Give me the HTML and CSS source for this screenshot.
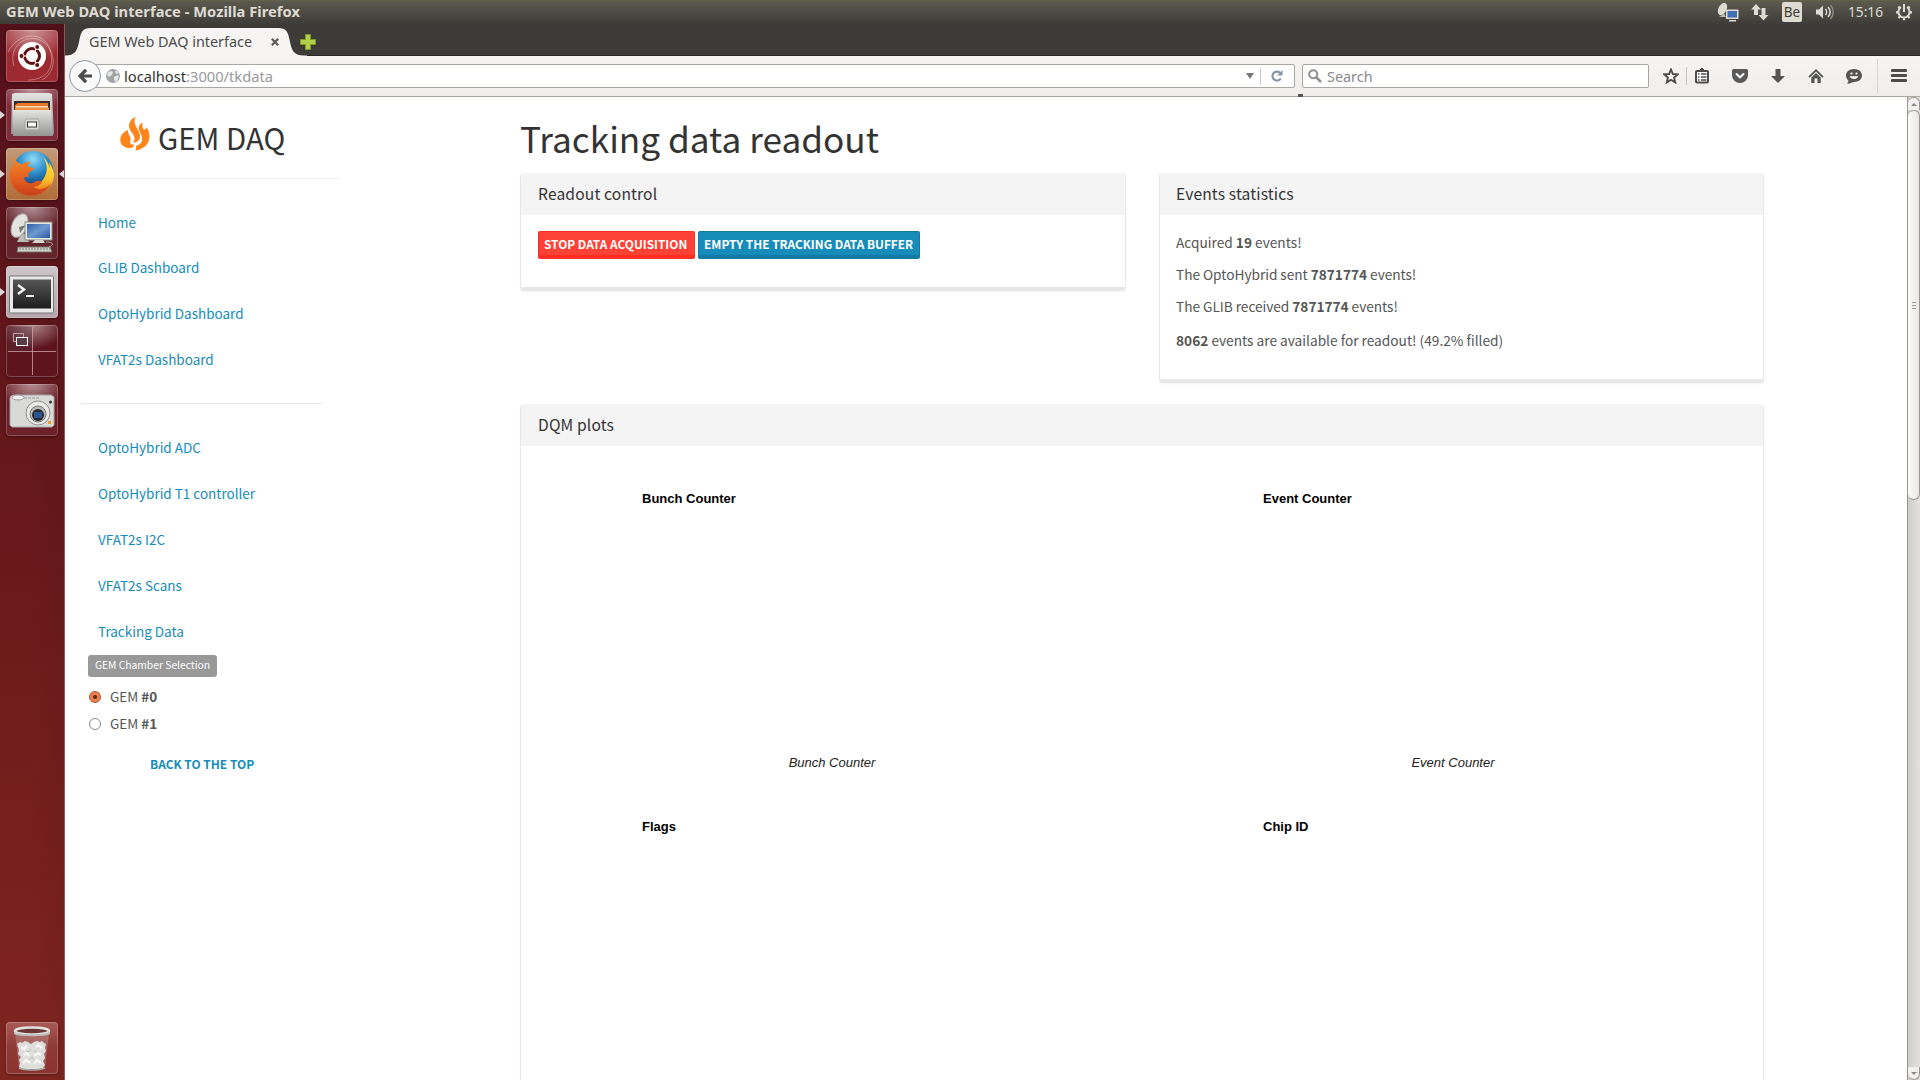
FILE: index.html
```html
<!DOCTYPE html>
<html lang="en">
<head>
<meta charset="utf-8">
<title>GEM Web DAQ interface</title>
<link rel="stylesheet" href="styles.css">
</head>
<body>
<svg class="defs" width="0" height="0" aria-hidden="true">
  <defs>
    <linearGradient id="metal" x1="0" y1="0" x2="0" y2="1"><stop offset="0" stop-color="#e4e4e2"/><stop offset="1" stop-color="#949492"/></linearGradient>
    <linearGradient id="screen" x1="0" y1="0" x2="1" y2="1"><stop offset="0" stop-color="#2e5fa8"/><stop offset=".5" stop-color="#6f9ad0"/><stop offset="1" stop-color="#2b57a0"/></linearGradient>
    <linearGradient id="term" x1="0" y1="0" x2="0" y2="1"><stop offset="0" stop-color="#555"/><stop offset=".5" stop-color="#3a3a3a"/><stop offset="1" stop-color="#1c1c1c"/></linearGradient>
    <radialGradient id="globe" cx=".5" cy=".2" r=".8"><stop offset="0" stop-color="#8fdcf7"/><stop offset=".45" stop-color="#2d8ccb"/><stop offset="1" stop-color="#0b2459"/></radialGradient>
    <linearGradient id="fox" x1="0" y1="0" x2="0" y2="1"><stop offset="0" stop-color="#f08a2c"/><stop offset=".5" stop-color="#e8641f"/><stop offset="1" stop-color="#c9401a"/></linearGradient>
    <linearGradient id="tail" x1="0" y1="0" x2="0" y2="1"><stop offset="0" stop-color="#ffe94a"/><stop offset=".6" stop-color="#fbc02a"/><stop offset="1" stop-color="#e8641f"/></linearGradient>
  </defs>
</svg>

<header class="menubar">
  <div class="menubar-title">GEM Web DAQ interface - Mozilla Firefox</div>
  <div class="tray">
    <svg class="tray-remote" width="22" height="20" viewBox="0 0 22 20"><ellipse cx="5.500" cy="7" rx="4" ry="6.600" transform="rotate(28 5.500 7)" fill="#dfdbd2"/><path d="M5 13l-3 2h7l-2-4z" fill="#b9b5ac"/><rect x="9" y="7.500" width="12.500" height="9.500" fill="#dfdbd2"/><rect x="10.500" y="9" width="9.500" height="6.500" fill="#3f6fb5"/><path d="M12 18h7v1.500h-7z" fill="#dfdbd2"/></svg>
    <svg class="tray-net" width="18" height="18" viewBox="0 0 18 18" fill="#dfdbd2"><path d="M5 1l5 5.500H7V12H3V6.500H0z"/><path d="M12.500 17.500l-5-5.500H10.500V5H14.500v7H17.500z"/></svg>
    <span class="tray-lang">Be</span>
    <svg class="tray-vol" width="20" height="18" viewBox="0 0 20 18" fill="none" stroke-width="1.500"><path d="M1 6.500h3L8 2.500v13l-4-4H1z" fill="#dfdbd2"/><path d="M10.500 6c1.400 1.600 1.400 4.400 0 6M13 4c2.600 3 2.600 7 0 10" stroke="#dfdbd2"/><path d="M15.500 2c3.500 4 3.500 10 0 14" stroke="#8d8a82"/></svg>
    <span class="tray-time">15:16</span>
    <svg class="tray-gear" width="18" height="18" viewBox="0 0 18 18" fill="none" stroke="#dfdbd2"><path d="M6 4.200A5.600 5.600 0 1 0 12 4.200" stroke-width="2"/><path d="M9 1v8" stroke-width="2"/><path d="M1 9.300h2M15 9.300h2M3.300 3.600l1.500 1.500M14.700 3.600l-1.500 1.500M3.400 15l1.500-1.500M14.600 15l-1.500-1.500M9 15v2.300" stroke-width="2.200"/></svg>
  </div>
</header>

<div class="desktop">
  <aside class="launcher">
    <div class="tile tile-dash"><svg width="52" height="52" viewBox="0 0 52 52"><g fill="none" stroke="#fff" stroke-opacity=".35"><path d="M2 22C12 2 38 0 44 20s-6 30-22 30"/><path d="M8 36C2 16 20 4 34 10s20 30 2 40"/></g><circle cx="26" cy="26" r="14" fill="#fff"/><circle cx="26" cy="26" r="7.500" fill="none" stroke="#5e1210" stroke-width="3"/><g stroke="#fff" stroke-width="1.200"><path d="M26 26H14M26 26l6-10.400M26 26l6 10.400"/></g><circle cx="26" cy="26" r="5.500" fill="#fff"/><g fill="#5e1210" stroke="#fff"><circle cx="15.500" cy="26" r="2.500"/><circle cx="31.200" cy="17" r="2.500"/><circle cx="31.200" cy="35" r="2.500"/></g></svg></div>
    <div class="tile tile-files running"><svg width="52" height="52" viewBox="0 0 52 52"><path d="M6 5l3-1h34l3 1 2 40H5z" fill="url(#metal)"/><rect x="8" y="12" width="36" height="12" fill="#3a2c24"/><path d="M9 16l3-2h30v9H9z" fill="#e8792c"/><path d="M10 17h32v3H10z" fill="#f6d9b4"/><path d="M9 18.500h34V24H9z" fill="#ef9145"/><path d="M7 21h38l2 26H7z" fill="url(#metal)"/><rect x="19" y="30" width="14" height="11" rx="2" fill="#d8d8d6" stroke="#a5a5a3"/><rect x="21.500" y="33" width="9" height="5" fill="#fff" stroke="#333"/></svg></div>
    <div class="tile tile-firefox running active"><svg width="52" height="52" viewBox="0 0 52 52"><circle cx="27" cy="23" r="20" fill="url(#globe)"/><path d="M36 8c5 5 6 14 3 20-3 7-9 11-15 10l3 9c12 0 21-9 21-21-1-4-2-8-5-12l1 6c-2-5-4-9-8-12z" fill="url(#tail)"/><path d="M8 9c-1 3-1 5 0 7-3 4-5 9-4 14 1 10 10 17.500 21 17.500 9 0 16-4 20-12-5 6-13 7-18 3 4 1 8-2 9-5-3-1-6-1-8 1-4 2-8 0-10-4 1-2 3-2 5-1l-1-4c2-2 5-3 7-5-2-1-5-1-7-2 0-2 1-3 3-5-4 0-7 1-9 3-3-1-6-3-8-7z" fill="url(#fox)"/></svg></div>
    <div class="tile tile-remote"><svg width="52" height="52" viewBox="0 0 52 52"><path d="M15 27l-4 8h12l-3-8z" fill="#bdbdb8"/><ellipse cx="13.500" cy="18.500" rx="7.500" ry="12.500" transform="rotate(24 13.500 18.500)" fill="#e3e3df" stroke="#a5a5a0"/><path d="M13 20l7-2-6 8z" fill="#777"/><rect x="19" y="15" width="27" height="18" fill="#e8e8e4" stroke="#8b8b86"/><rect x="21" y="17" width="23" height="14" fill="url(#screen)"/><path d="M29 33h8l2 3H26z" fill="#d6d6d2"/><path d="M12 40h32l2 5H11z" fill="#d2d2cd" stroke="#73736f"/><path d="M13 42h31" stroke="#777" stroke-dasharray="2 1"/><path d="M40 35c8 0 8 3 3 5" fill="none" stroke="#aaa"/></svg></div>
    <div class="tile tile-term running"><svg width="52" height="52" viewBox="0 0 52 52"><rect x="3.500" y="10" width="44" height="37" rx="1" fill="#e9e9e7" stroke="#777"/><rect x="7" y="13.500" width="38" height="29" fill="url(#term)"/><path d="M12 19l6 4.500-6 4.500" fill="none" stroke="#eee" stroke-width="2.500"/><path d="M20 30h8" stroke="#eee" stroke-width="2"/></svg></div>
    <div class="tile tile-ws"><svg width="52" height="52" viewBox="0 0 52 52" fill="none"><path d="M2 2h24v24H2z" fill="#503040" fill-opacity=".35"/><path d="M26.500 2v48M2 26.500h48" stroke="#c9a0a2" stroke-opacity=".8"/><rect x="7.500" y="8.500" width="10" height="8" stroke="#b9a0a4"/><rect x="10.500" y="12.500" width="11" height="8" fill="#5a3b45" stroke="#fff"/></svg></div>
    <div class="tile tile-cam"><svg width="52" height="52" viewBox="0 0 52 52"><path d="M5 12l3-1h37l3 2v28l-2 2H6l-2-2V14z" fill="#d9d9d7" stroke="#a5a5a2"/><path d="M18 14h16" stroke="#999" stroke-dasharray="3 1"/><ellipse cx="12" cy="13.500" rx="6" ry="2.500" fill="#eee" stroke="#999"/><circle cx="32" cy="29" r="12" fill="#e9e9e8" stroke="#8d8d8b"/><circle cx="32" cy="30" r="8" fill="#b9b9b8" stroke="#777"/><circle cx="32" cy="31" r="6" fill="#26292e"/><rect x="28" y="28" width="8" height="6" fill="#2a5590"/><circle cx="44.500" cy="18" r="1.500" fill="#333"/><rect x="42" y="37" width="3" height="3" fill="#e89a2b"/></svg></div>
    <div class="tile tile-trash"><svg width="52" height="52" viewBox="0 0 52 52"><path d="M9 10h34l-4 37H13z" fill="#c9a3a2" fill-opacity=".4"/><path d="M11 22l3-2 2 1 3-2 3 1 3 2 3-2 3-1 3 1 2-1 2 2 2 1-1 4 1 3-2 3 1 4-2 3 2 4-2 3-4 1H17l-4-2 1-4-1-3 2-3-3-3 1-4z" fill="#dededb"/><path d="M15 25l3 2 3-3M30 25l3-2 3 3M18 33l3-2 2 3M28 34l4-3 3 2M17 41l3-3 4 3M28 42l3-4 4 3" fill="none" stroke="#f6f6f4" stroke-width="2.500"/><path d="M20 29l3 1 2-3M28 29l3 1M23 38l3-3 2 3" fill="none" stroke="#bfbfbc"/><ellipse cx="26" cy="9" rx="17" ry="3.500" fill="#6f3733" stroke="#e0e0de" stroke-width="2.500"/><path d="M8 10v2c4 3 32 3 36 0v-2c-5 3-31 3-36 0z" fill="#bdbdba"/><path d="M13 46c5 2.500 21 2.500 26 0" fill="none" stroke="#aaa" stroke-width="1.500"/></svg></div>
  </aside>

  <div class="browser">
    <div class="tabstrip">
      <div class="tab">
        <svg class="tab-shape" width="245" height="32" viewBox="0 0 245 32"><path d="M0 31.500C10 31.500 12 27 14 18 16 8 17 4 26 4H213c9 0 10 4 12 14 2 9 4 13.500 14 13.500h3v.5H0z" fill="#f6f5f4"/></svg>
        <span class="tab-title">GEM Web DAQ interface</span>
        <svg class="tab-close" width="8" height="8" viewBox="0 0 8 8" stroke="#5a5a5a" stroke-width="2.200"><path d="M.8.8l6.400 6.400M7.200.8L.8 7.200"/></svg>
      </div>
      <svg class="newtab" width="16" height="16" viewBox="0 0 16 16"><path d="M5.500.5h5v5h5v5h-5v5h-5v-5h-5v-5h5z" fill="#b4d04a" stroke="#7d9a22"/></svg>
    </div>
    <div class="toolbar">
      <div class="back"><svg width="14" height="14" viewBox="0 0 14 14" fill="none" stroke="#4a4a4a" stroke-width="3.200"><path d="M8 .8L2 7l6 6.200M2.500 7H14"/></svg></div>
      <div class="urlbar">
        <svg width="14" height="14" viewBox="0 0 14 14"><circle cx="7" cy="7" r="7" fill="#a3a3a3"/><path d="M2 3l3-1 2 1-1 3-3 2-2-2zM8 8l4-2 1 2-2 4-2 1-1-3zM9 2l2 0 2 2-3 1z" fill="#e4e4e4"/></svg>
        <span class="url"><b>localhost</b>:3000/tkdata</span>
        <svg class="drop" width="8" height="6" viewBox="0 0 8 6"><path d="M0 0h8L4 6z" fill="#777"/></svg>
        <span class="urlsep"></span>
        <svg class="reload" width="12" height="12" viewBox="0 0 12 12"><path d="M9.300 3A4.500 4.500 0 1 0 9.800 8.500" fill="none" stroke="#8595a5" stroke-width="2.200"/><path d="M11.500 0v5.500H6z" fill="#8595a5"/></svg>
      </div>
      <div class="searchbar">
        <svg width="14" height="14" viewBox="0 0 14 14" fill="none" stroke="#8e8e8e"><circle cx="5.200" cy="5.200" r="4" stroke-width="2"/><path d="M8 8l5 5" stroke-width="2.500"/></svg>
        <span>Search</span>
      </div>
      <div class="tools">
        <span class="tool tool-star"><svg width="16" height="16" viewBox="0 0 16 16"><path d="M8 1.500l1.900 4.500 4.900.4-3.700 3.200 1.100 4.800L8 11.800l-4.200 2.600 1.100-4.800L1.200 6.400l4.900-.4z" fill="#f6f5f4" stroke="#4c4c4c" stroke-width="1.900"/></svg></span>
        <span class="tool-sep"></span>
        <span class="tool tool-list"><svg width="16" height="16" viewBox="0 0 16 16"><rect x="2" y="3" width="12" height="11.500" rx="1" fill="#fff" stroke="#4c4c4c" stroke-width="2"/><path d="M5 3l3-3 3 3z" fill="#4c4c4c" stroke="#4c4c4c"/><path d="M4 6h1.500M4 9h1.500M4 12h1.500M7 6h5.500M7 9h5.500M7 12h5.500" stroke="#4c4c4c" stroke-width="1.500"/></svg></span>
        <span class="tool"><svg width="16" height="16" viewBox="0 0 16 16"><path d="M1.500 1h13A1.500 1.500 0 0 1 16 2.500v4.500a8 8 0 0 1-16 0V2.500A1.500 1.500 0 0 1 1.500 1z" fill="#5a5a5a"/><path d="M4.500 6L8 9.300 11.500 6" fill="none" stroke="#fff" stroke-width="2" stroke-linecap="round"/></svg></span>
        <span class="tool"><svg width="16" height="16" viewBox="0 0 16 16"><path d="M5.500 1h5v7H15l-7 7-7-7h4.500z" fill="#555"/></svg></span>
        <span class="tool"><svg width="16" height="16" viewBox="0 0 16 16"><path d="M1 9.200L8 2.300l7 6.900" fill="none" stroke="#555" stroke-width="1.800"/><path d="M3.300 9.500L8 5l4.700 4.500V15H9.500v-4.500h-3V15H3.300z" fill="#555"/></svg></span>
        <span class="tool"><svg width="16" height="16" viewBox="0 0 16 16"><path d="M8 1C12.500 1 16 3.800 16 7.500S12.500 14 8 14c-1 0-2 0-3 1-1 .6-3 .7-4 .5 1-1 1.500-2 1.500-3C1 11.300 0 9.600 0 7.500 0 3.800 3.500 1 8 1z" fill="#555"/><circle cx="5.500" cy="5.500" r="1.100" fill="#fff"/><circle cx="10.500" cy="5.500" r="1.100" fill="#fff"/><path d="M3.700 8.300h8.600c-1 3.600-7.600 3.600-8.600 0z" fill="#fff"/></svg></span>
        <span class="menu-sep"></span>
        <span class="tool tool-menu"><svg width="16" height="16" viewBox="0 0 16 16" fill="#4c4c4c"><rect y="1" width="16" height="3" rx="1"/><rect y="6" width="16" height="3" rx="1"/><rect y="11" width="16" height="3" rx="1"/></svg></span>
      </div>
      <span class="drop-mark"></span>
    </div>

    <div class="viewport">
      <nav class="sidebar">
        <div class="brand">
          <svg width="30" height="34" viewBox="0 0 30 34" fill="#ff851b"><path d="M8 13C3 15 .3 18.500.3 22.700.3 27.500 4 31 10 31c2.300 0 3.800-1 4.200-3.200-3.200.3-4.700-1.300-4-3.800.8-2.500.3-3.700-.8-5.500C8.400 16.800 7.900 15 8 13z"/><path d="M15.500 0C10.500 2 8.300 6 9.300 11c.8 3.500 5 6 5.200 10 .1 2-.6 3.500-2 4.500 3.700.3 7-1.500 7.500-5.200.4-3.300-1.300-5.300-2.700-8.300C15.500 8.300 13.300 4.500 15.500 0z"/><path d="M22.800 5.500c-3.600 1.800-5 4.700-3.500 8.300 1.400 3.300 3.500 5.700 2.700 9.700-.6 3-2.900 4.700-6 5.200.5 1.800.3 3.300-.8 4.800C23.500 32.500 29.500 27 29.500 19.500c0-4-1.300-7-2.900-9.300-.6 1.500-1.200 2.300-2.200 2.300-1.900-.3-2.400-3.500-1.600-7z"/></svg>
          <span>GEM DAQ</span>
        </div>
        <ul class="links">
          <li>Home</li><li>GLIB Dashboard</li><li>OptoHybrid Dashboard</li><li>VFAT2s Dashboard</li>
        </ul>
        <hr>
        <ul class="links links-tools">
          <li>OptoHybrid ADC</li><li>OptoHybrid T1 controller</li><li>VFAT2s I2C</li><li>VFAT2s Scans</li><li>Tracking Data</li>
        </ul>
        <div class="chamber">
          <span class="label">GEM Chamber Selection</span>
          <div class="option"><i class="radio checked"></i><span>GEM <b>#0</b></span></div>
          <div class="option"><i class="radio"></i><span>GEM <b>#1</b></span></div>
        </div>
        <div class="totop">BACK TO THE TOP</div>
      </nav>

      <main class="content">
        <h1>Tracking data readout</h1>
        <div class="row">
          <section class="panel">
            <h2>Readout control</h2>
            <div class="panel-body buttons">
              <span class="btn btn-danger">STOP DATA ACQUISITION</span>
              <span class="btn btn-primary">EMPTY THE TRACKING DATA BUFFER</span>
            </div>
          </section>
          <section class="panel">
            <h2>Events statistics</h2>
            <div class="panel-body stats">
              <p>Acquired <b>19</b> events!</p>
              <p>The OptoHybrid sent <b>7871774</b> events!</p>
              <p>The GLIB received <b>7871774</b> events!</p>
              <p><b>8062</b> events are available for readout! (49.2% filled)</p>
            </div>
          </section>
        </div>
        <section class="panel plots-panel">
          <h2>DQM plots</h2>
          <div class="plots">
            <figure><h3>Bunch Counter</h3><figcaption>Bunch Counter</figcaption></figure>
            <figure><h3>Event Counter</h3><figcaption>Event Counter</figcaption></figure>
            <figure><h3>Flags</h3></figure>
            <figure><h3>Chip ID</h3></figure>
          </div>
        </section>
      </main>

      <div class="scrollbar">
        <div class="sb-btn"><svg width="6" height="3" viewBox="0 0 6 3"><path d="M0 3l3-3 3 3z" fill="#8a8a88"/></svg></div>
        <div class="sb-thumb"><i></i><i></i><i></i></div>
        <div class="sb-btn sb-down"><svg width="6" height="3" viewBox="0 0 6 3"><path d="M0 0l3 3 3-3z" fill="#8a8a88"/></svg></div>
      </div>
    </div>
  </div>
</div>
</body>
</html>
```
FILE: styles.css
```css
* { box-sizing: border-box; }
html, body { margin: 0; height: 100%; overflow: hidden; }
body {
  display: flex;
  flex-direction: column;
  background: #fff;
  font-family: "Noto Sans CJK SC", "Noto Sans", sans-serif;
  font-size: 13.5px;
  color: #555;
}
svg { display: block; flex: none; }
.defs { position: absolute; }
ul, h1, h2, h3, p, figure { margin: 0; padding: 0; font-weight: 400; }
ul { list-style: none; }

/* Desktop menu bar */
.menubar {
  flex: none;
  height: 24px;
  display: flex;
  justify-content: space-between;
  align-items: center;
  padding: 0 7px 0 6px;
  background: linear-gradient(#66624f 0, #5b584e 2px, #3d3c38 100%);
  font-family: "Noto Sans", sans-serif;
  color: #dfdbd2;
}
.menubar-title { font-size: 14.65px; font-weight: 700; line-height: 20px; margin-top: -2px; letter-spacing: .04px; }
.tray { display: flex; align-items: center; }
.tray-net { margin-left: 12px; }
.tray-lang {
  margin-left: 13px;
  width: 20px;
  height: 20px;
  border-radius: 2px;
  background: #dfdbd2;
  color: #3c3b37;
  font-size: 13.5px;
  line-height: 20px;
  text-align: center;
}
.tray-vol { margin-left: 13px; }
.tray-time { margin-left: 13px; font-size: 13.7px; line-height: 22px; }
.tray-gear { margin-left: 12px; }

.desktop { flex: 1; display: flex; min-height: 0; }

/* Launcher */
.launcher {
  flex: none;
  width: 65px;
  padding: 6px 0 6px 6px;
  display: flex;
  flex-direction: column;
  gap: 7px;
  background: linear-gradient(90deg, rgba(0,0,0,0) 50%, rgba(0,0,0,.05)), linear-gradient(#54101a 0, #5c141b 20%, #67181b 45%, #761f1d 75%, #7f2520 100%);
  border-right: 1px solid #93575a;
}
.tile {
  position: relative;
  flex: none;
  width: 52px;
  height: 52px;
  border-radius: 4px;
  box-shadow: inset 0 0 0 1px rgba(255,255,255,.22), 0 1px 3px rgba(0,0,0,.35);
  background: radial-gradient(ellipse 34px 24px at 50% 0, rgba(255,255,255,.5), rgba(255,255,255,0)), #71303a;
}
.tile-dash { background: radial-gradient(ellipse 40px 30px at 50% 0, rgba(255,255,255,.5), rgba(255,255,255,0)), #9c2a30; }
.tile-files { background-color: #7d2a39; }
.tile-firefox { background: linear-gradient(#c49a78, #b06c36); }
.tile-remote { background-color: #65232b; }
.tile-term { background: linear-gradient(#cfc6ca, #b5a5aa); }
.tile-ws { background-color: #5e141d; }
.tile-cam { background-color: #6c2129; }
.tile-trash { margin-top: auto; background: linear-gradient(#a85a57, #8d3834 50%, #8a3430); }
.running::before {
  content: "";
  position: absolute;
  left: -6px;
  top: 22px;
  border: 4px solid transparent;
  border-left: 5px solid #dcd5d6;
  border-right: 0;
}
.active::after {
  content: "";
  position: absolute;
  right: -6px;
  top: 22px;
  border: 4px solid transparent;
  border-right: 5px solid #dcd5d6;
  border-left: 0;
}

/* Browser chrome */
.browser { flex: 1; display: flex; flex-direction: column; min-width: 0; }
.tabstrip {
  flex: none;
  height: 32px;
  display: flex;
  align-items: flex-start;
  background: #3c3b37;
  box-shadow: inset 0 -1px #2a2926;
  font-family: "Noto Sans", sans-serif;
}
.tab { position: relative; width: 235px; height: 32px; display: flex; align-items: center; padding: 4px 0 0 24px; }
.tab-shape { position: absolute; left: 0; top: 0; }
.tab-title { position: relative; width: 182px; font-size: 14.4px; line-height: 24px; color: #4c4c4c; white-space: nowrap; }
.tab-close { position: relative; }
.newtab { margin: 10px 0 0; }
.toolbar {
  position: relative;
  flex: none;
  height: 41px;
  display: flex;
  align-items: flex-start;
  padding-left: 4px;
  background: linear-gradient(#f6f5f4, #efeeed);
  border-bottom: 1px solid #aaa6a0;
  font-family: "Noto Sans", sans-serif;
}
.back {
  position: relative;
  z-index: 1;
  width: 32px;
  height: 32px;
  margin-top: 4px;
  border: 1px solid #8d98a8;
  border-radius: 50%;
  background: #fafafa;
  display: flex;
  align-items: center;
  justify-content: center;
}
.urlbar, .searchbar {
  height: 24px;
  margin-top: 8px;
  display: flex;
  align-items: center;
  border: 1px solid #aaa6a0;
  border-radius: 2px;
  background: #fff;
}
.urlbar { width: 1200px; margin-left: -6px; padding: 0 11px 0 10px; }
.url { flex: 1; margin: 0 0 0 4px; font-size: 14.7px; line-height: 22px; color: #999; }
.url b { font-weight: 400; color: #333; }
.urlsep { width: 1px; height: 17px; margin: 0 10px 0 6px; background: #c6ccd2; }
.searchbar { width: 347px; margin-left: 7px; padding-left: 5px; font-size: 14.4px; color: #8a8a8a; }
.searchbar span { margin: 1px 0 0 5px; line-height: 22px; }
.tools { display: flex; align-items: center; height: 40px; }
.tool { margin-right: 22px; }
.tool-star { margin: 0 7px 0 14px; }
.tool-sep { width: 1px; height: 18px; margin-right: 7px; background: #bcc6d0; }
.menu-sep { width: 1px; height: 34px; margin: 0 13px 0 -7px; background: #d8d6d4; }
.tool-menu { margin: 0; }
.drop-mark { position: absolute; left: 1233px; bottom: -1px; width: 5px; height: 3px; background: #555; }

.viewport { flex: 1; min-height: 0; display: flex; overflow: hidden; }

/* Sidebar */
.sidebar { flex: none; width: 274px; }
.brand {
  height: 82px;
  padding: 20px 0 0 55px;
  display: flex;
  border-bottom: 1px solid #eee;
  color: #333;
}
.brand span { margin: -1px 0 0 8px; font-size: 29.4px; line-height: 42px; height: 42px; }
.sidebar .links { padding: 20px 0 20px 33px; color: #158cba; }
.links li { height: 46px; line-height: 45px; }
.links-tools li { line-height: 47px; }
.links li:first-child { line-height: 47px; }
.sidebar hr { margin: 0 16px; border: 0; height: 1px; background: #e8e8e8; }
.links + .chamber { margin-top: -19px; padding-left: 24px; }
.label {
  display: block;
  width: 129px;
  height: 22px;
  margin: 0 0 6px -1px;
  border-radius: 3px;
  background: #999;
  color: #fff;
  font-size: 10.3px;
  line-height: 19px;
  text-align: center;
}
.option { height: 27px; display: flex; align-items: center; }
.option span { line-height: 25px; margin: -1px 0 0 9px; }
.radio { width: 12px; height: 12px; border: 1px solid #888; border-radius: 50%; background: #fff; }
.checked { border-color: #a8502d; background: radial-gradient(circle, #5a3628 0 1.7px, #f0814f 2.5px); }
.totop { padding: 15px 0 0 85px; font-size: 11.95px; font-weight: 700; line-height: 24px; color: #158cba; }

/* Main content */
.content { flex: none; width: 1244px; margin-left: 181px; color: #555; }
h1 { margin-top: 14px; height: 62px; font-size: 35.2px; line-height: 54px; color: #333; }
.row { display: grid; grid-template-columns: 606px 605px; justify-content: space-between; align-items: start; }
.panel {
  background: #fff;
  border: 1px solid #e7e7e7;
  border-top: 0;
  border-bottom-width: 4px;
  border-radius: 4px;
  box-shadow: 0 1px 2px rgba(0,0,0,.05);
}
h2 {
  height: 42px;
  padding-left: 17px;
  background: #f4f4f4;
  border-radius: 3px 3px 0 0;
  color: #333;
  font-size: 15.6px;
  line-height: 40px;
  letter-spacing: .15px;
}
.panel + .panel h2 { padding-left: 16px; }
.panel-body { padding: 16px 17px; }
.buttons { height: 72px; display: flex; gap: 3px; }
.btn {
  height: 28px;
  padding-left: 5px;
  border: 1px solid;
  border-bottom-width: 4px;
  border-radius: 2px;
  color: #fff;
  font-size: 11.85px;
  font-weight: 700;
  line-height: 24px;
  white-space: nowrap;
}
.btn-danger { width: 157px; background: #ff4136; border-color: #ff2e22; }
.btn-primary { width: 222px; background: #158cba; border-color: #127ba3; }
.stats { height: 164px; padding: 11px 16px; font-size: 13.7px; }
.stats p { height: 32.67px; line-height: 32px; }
.stats p:nth-child(2), .stats p:nth-child(3) { line-height: 31px; letter-spacing: -.04px; }
.plots-panel { margin-top: 21px; height: 760px; }
.plots { display: grid; grid-template-columns: 621px 621px; grid-auto-rows: 328px; padding-top: 40px; }
figure { display: flex; flex-direction: column; padding-left: 121px; font-family: "Liberation Sans", Arial, sans-serif; font-size: 13px; }
h3 { font-size: 13px; font-weight: 700; line-height: 25px; color: #000; }
figcaption { width: 380px; margin-top: 239px; line-height: 25px; text-align: center; font-style: italic; color: #222; }

/* Scrollbar */
.scrollbar {
  flex: none;
  width: 13px;
  margin-left: auto;
  display: flex;
  flex-direction: column;
  background: linear-gradient(90deg, #cfcecc, #e2e1df);
  border-left: 1px solid #999793;
}
.sb-btn { height: 13px; display: flex; align-items: center; justify-content: center; background: #f2f1f0; border: 1px solid #999793; border-width: 1px 1px 0 0; border-radius: 6px 6px 0 0; }
.sb-down { margin-top: auto; border-width: 0 1px 1px 0; border-radius: 0 0 6px 6px; }
.sb-thumb {
  height: 390px;
  border: 1px solid #999793;
  border-left: 0;
  border-radius: 6px;
  background: linear-gradient(90deg, #fbfbfa, #e9e8e6);
  display: flex;
  flex-direction: column;
  align-items: center;
  justify-content: center;
  gap: 2px;
}
.sb-thumb i { width: 4px; height: 1px; background: #999; }
```
